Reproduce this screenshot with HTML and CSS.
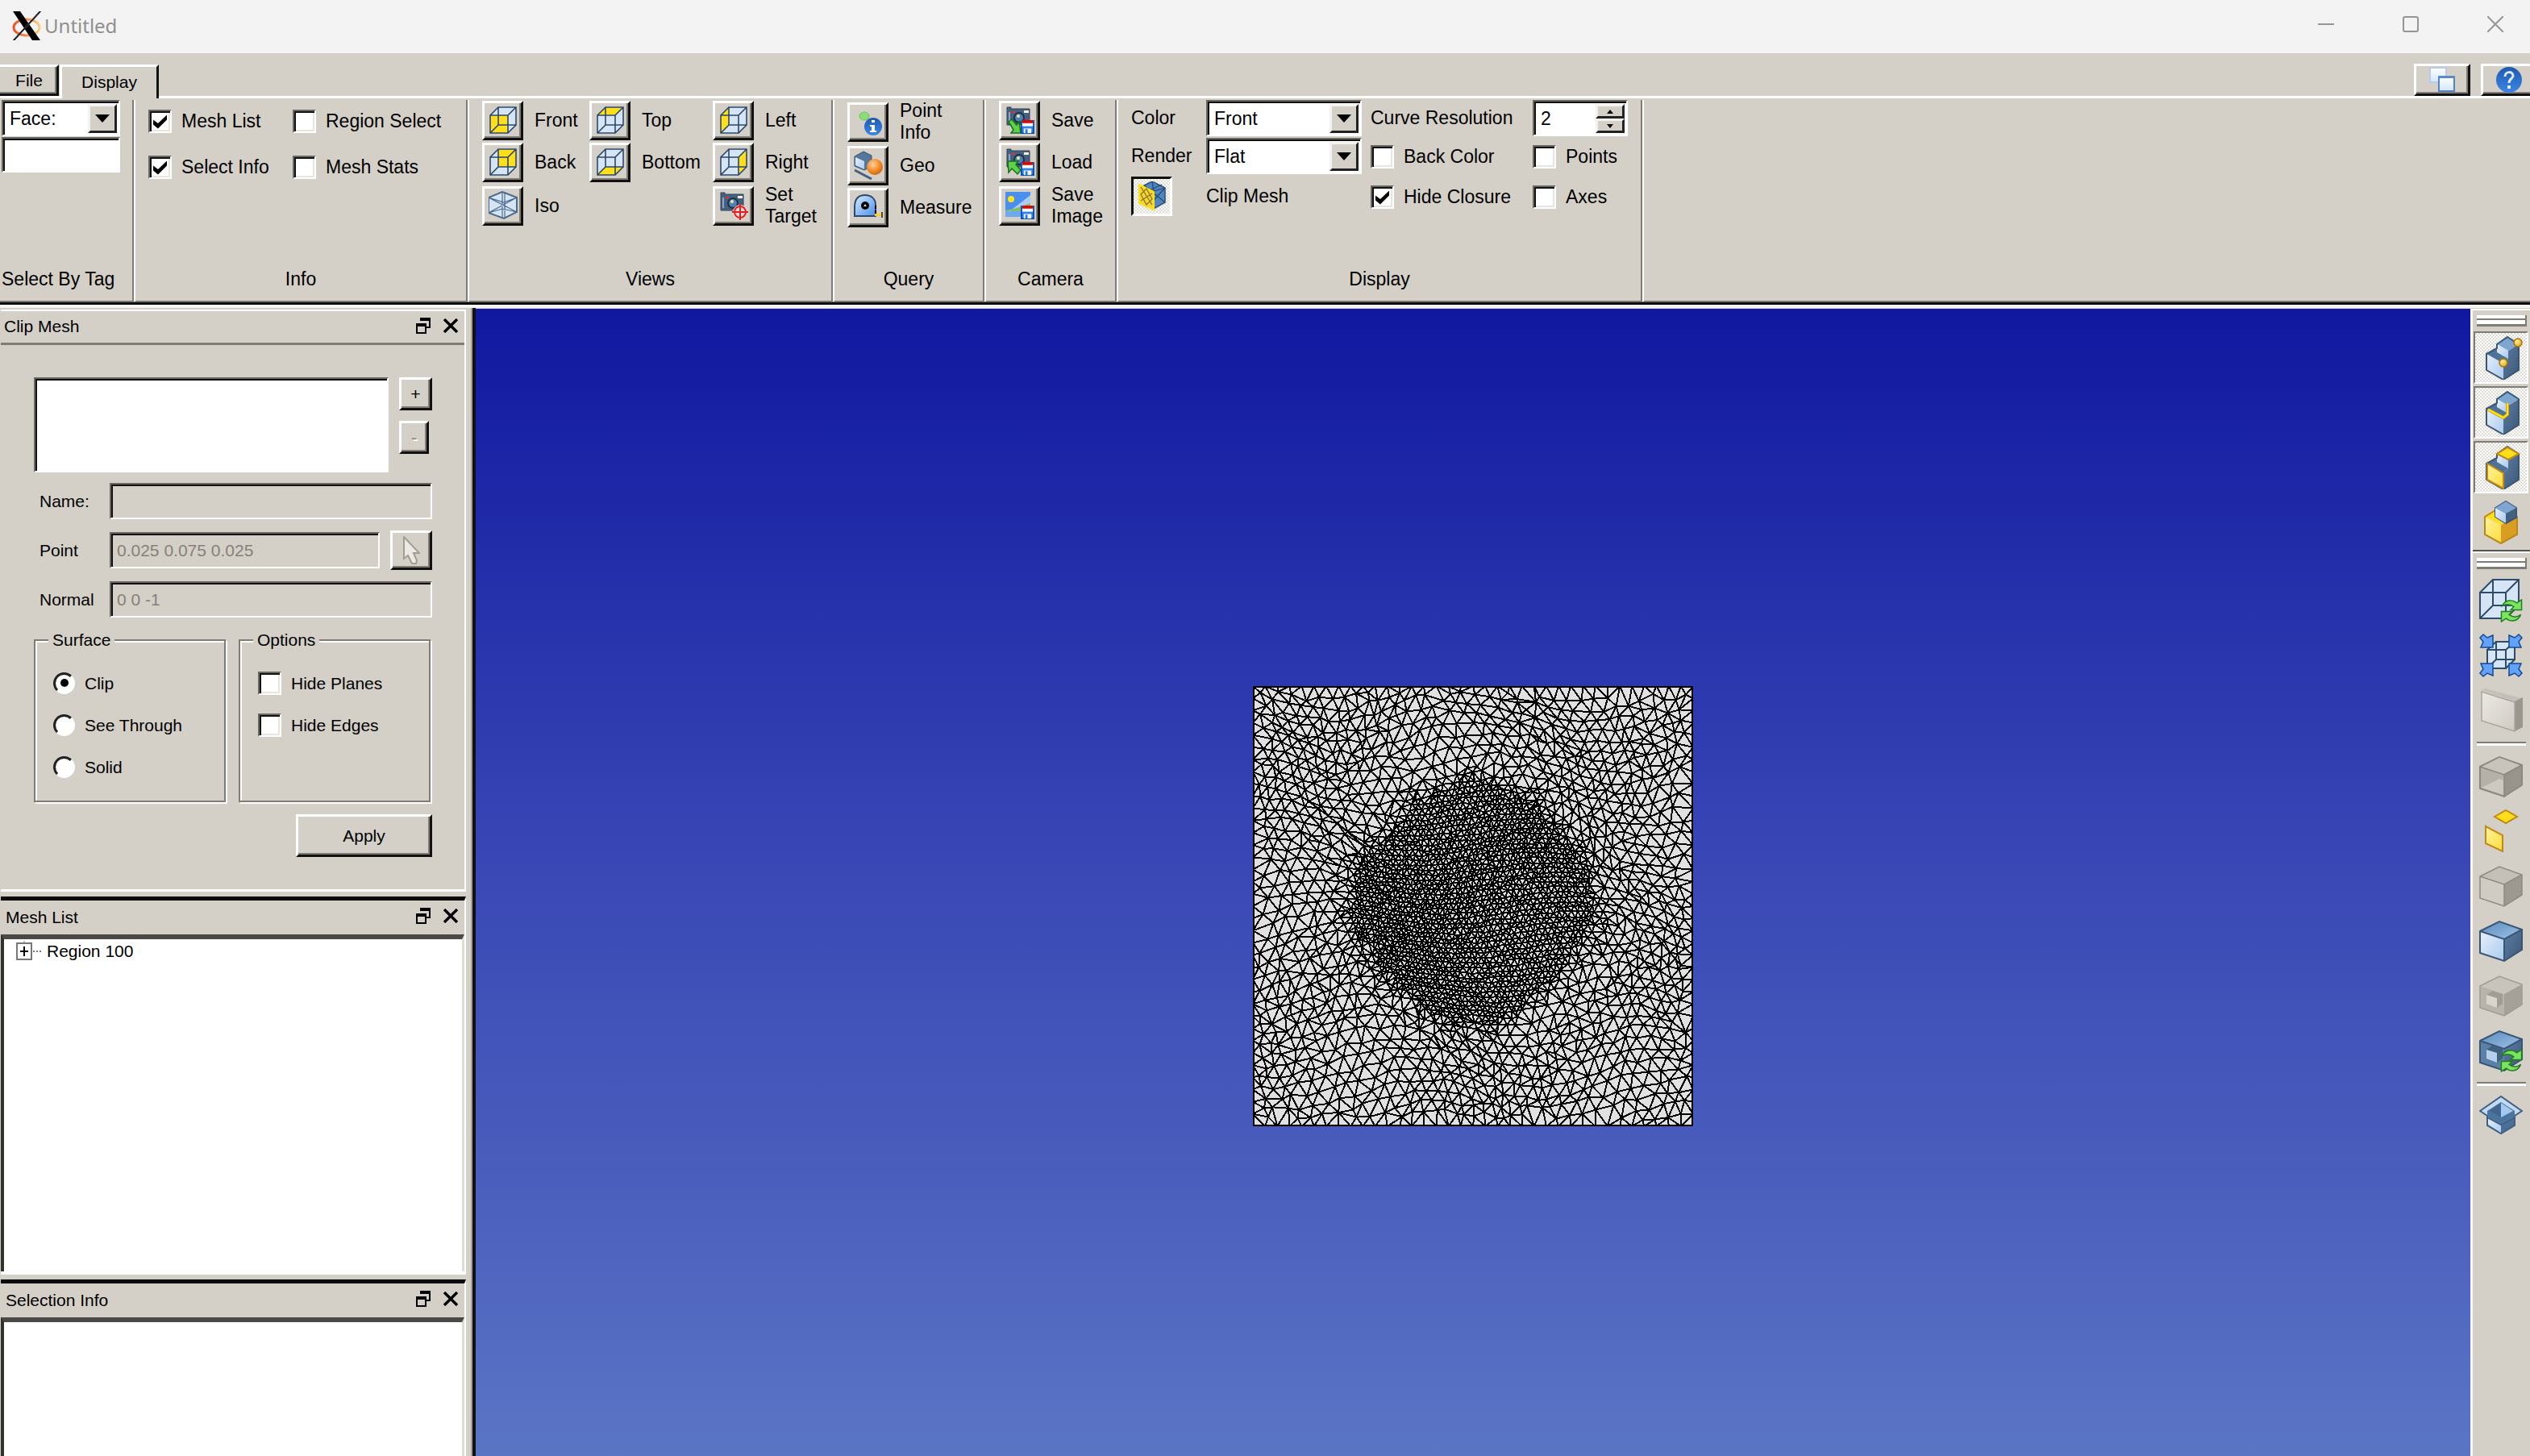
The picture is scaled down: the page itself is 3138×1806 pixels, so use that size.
FILE: index.html
```html
<!DOCTYPE html>
<html lang="en">
<head>
<meta charset="utf-8">
<title>Untitled</title>
<link rel="stylesheet" href="styles.css">
</head>
<body>
<svg class="sprite" aria-hidden="true">
  <defs>
    <linearGradient id="g-light" x1="0" y1="0" x2="1" y2="1"><stop offset="0" stop-color="#e6f0fb"/><stop offset="1" stop-color="#abcaee"/></linearGradient>
    <linearGradient id="g-top" x1="0" y1="0" x2="1" y2="1"><stop offset="0" stop-color="#5c8abb"/><stop offset="1" stop-color="#9cc2ea"/></linearGradient>
    <linearGradient id="g-dark" x1="0" y1="0" x2="1" y2="1"><stop offset="0" stop-color="#5b7da3"/><stop offset="1" stop-color="#3d5877"/></linearGradient>
    <linearGradient id="g-yellow" x1="0" y1="0" x2="1" y2="1"><stop offset="0" stop-color="#fff2a0"/><stop offset="1" stop-color="#ffdd3a"/></linearGradient>
    <radialGradient id="g-orange" cx=".4" cy=".35" r=".7"><stop offset="0" stop-color="#ffd2a0"/><stop offset=".6" stop-color="#f08a24"/><stop offset="1" stop-color="#c96008"/></radialGradient>
    <radialGradient id="g-gold" cx=".4" cy=".35" r=".7"><stop offset="0" stop-color="#fff3a0"/><stop offset="1" stop-color="#e0a010"/></radialGradient>
    <linearGradient id="g-blue" x1="0" y1="0" x2="0" y2="1"><stop offset="0" stop-color="#1d5ab0"/><stop offset="1" stop-color="#3d86e6"/></linearGradient>
    <linearGradient id="g-tape" x1="0" y1="0" x2="1" y2="1"><stop offset="0" stop-color="#dcebfd"/><stop offset="1" stop-color="#4a90ea"/></linearGradient>
    <linearGradient id="g-win" x1="0" y1="0" x2="0" y2="1"><stop offset="0" stop-color="#fff"/><stop offset="1" stop-color="#d3e5f6"/></linearGradient>
    <linearGradient id="g-grey" x1="0" y1="0" x2="1" y2="1"><stop offset="0" stop-color="#ece9e4"/><stop offset="1" stop-color="#cfcbc3"/></linearGradient>
    <linearGradient id="g-ring" x1="0" y1="0" x2="1" y2="0"><stop offset="0" stop-color="#f0501e"/><stop offset="1" stop-color="#f8cf80"/></linearGradient>
  </defs>
  <symbol id="cube-fill" viewBox="0 0 36 36"><path d="M1 12 12 1H35V24L24 35H1Z" fill="#d5e5f6"/></symbol>
  <symbol id="cube-lines" viewBox="0 0 36 36"><path d="M2 12H24V34H2ZM12 2H34V24H12ZM2 12 12 2M24 12 34 2M24 34 34 24M2 34 12 24" fill="none" stroke="#2b4767" stroke-width="1.6"/></symbol>
  <symbol id="camera" viewBox="0 0 36 36"><path d="M2 5V2H7V4H30V24H2Z" fill="#46617f" stroke="#2c425c"/><path d="M4 8H6V21H4Z" fill="#8fa5bd"/><path d="M8 7H12V9H8Z" fill="#e03030"/><path d="M23 6H29V9H23Z" fill="#f6f0d8"/><circle cx="17" cy="15" r="7" fill="#1f2f42"/><circle cx="17" cy="15" r="5" fill="#4f80b8"/><circle cx="16" cy="13" r="2" fill="#f0e89a"/></symbol>
  <symbol id="floppy" viewBox="0 0 18 18"><path d="M1 1H17V17H1Z" fill="#3282ea" stroke="#0c4fb0" stroke-width="2"/><path d="M2 0H16V8H2Z" fill="#fff"/><path d="M2 0H16V4H2Z" fill="#dc0808"/><path d="M4 11H14V17H4Z" fill="#f0f6ff"/><path d="M6 12H9V17H6Z" fill="#2a78e0"/></symbol>
  <symbol id="step-block" viewBox="0 0 54 54"><path d="M36 18 49 10V42L30 54V34L36 28Z" fill="url(#g-dark)"/><path d="M22 10 35 1 49 10 36 18Z" fill="#7ea6d0"/><path d="M22 10 36 18V28L22 20Z" fill="url(#g-light)"/><path d="M9 22 22 15V20L36 28 30 34Z" fill="#4f7297"/><path d="M9 22 30 34V54L9 42Z" fill="url(#g-light)"/><path d="M9 22 22 15V10L35 1 49 10V42L30 54 9 42Z" fill="none" stroke="#3a5674" stroke-width="2"/></symbol>
  <symbol id="refresh" viewBox="0 0 28 30"><path d="M2 9C6 1 15 0 21 5L27 1V14H13L17 10C12 6 7 6 2 9Z" fill="#7be35f" stroke="#1f7f1a" stroke-width="1.5"/><path d="M26 20C22 29 13 30 7 25L1 29V16H15L11 20C16 24 21 24 26 20Z" fill="#7be35f" stroke="#1f7f1a" stroke-width="1.5"/></symbol>
  <symbol id="float" viewBox="0 0 20 22"><path d="M7 2H18V13H13" fill="none" stroke="#000" stroke-width="2"/><path d="M6 1H19V5H6Z"/><path d="M2 9H13V20H2Z" fill="#d4d0c8" stroke="#000" stroke-width="2"/><path d="M1 8H14V12H1Z"/></symbol>
  <symbol id="cross" viewBox="0 0 20 18"><path d="M2 1 18 17M18 1 2 17" stroke="#000" stroke-width="3.4"/></symbol>
</svg>

<header class="titlebar">
  <svg class="logo" viewBox="0 0 36 36" aria-hidden="true"><ellipse cx="18" cy="20" rx="16" ry="10" fill="none" stroke="url(#g-ring)" stroke-width="3"/><path d="M1 0H10L35 36H25Z" fill="#000"/><path d="M34 0H36L3 36H1Z" fill="#000" stroke="#444"/></svg>
  <h1 class="title">Untitled</h1>
  <div class="window-controls">
    <button class="wbtn" aria-label="Minimize"><svg viewBox="0 0 20 20"><path d="M0 10H20"/></svg></button>
    <button class="wbtn" aria-label="Maximize"><svg viewBox="0 0 20 20"><rect x="1" y="1" width="18" height="18" rx="2"/></svg></button>
    <button class="wbtn" aria-label="Close"><svg viewBox="0 0 20 20"><path d="M0 0 20 20M20 0 0 20"/></svg></button>
  </div>
</header>

<nav class="tabs">
  <button class="tab tab-file">File</button>
  <button class="tab tab-active">Display</button>
  <div class="tab-tools">
    <button class="corner-btn" aria-label="Windows"><svg viewBox="0 0 32 32"><path d="M1 1H21V19H1Z" fill="url(#g-win)" stroke="#b4cdec" stroke-width="2"/><path d="M12 12H31V30H12Z" fill="url(#g-win)" stroke="#5585c8" stroke-width="2"/><path d="M11 11H32V14H11Z" fill="#5a8bce"/></svg></button>
    <button class="corner-btn" aria-label="Help"><svg viewBox="0 0 32 32"><circle cx="16" cy="16" r="16" fill="url(#g-blue)"/><path d="M11 12C11 5 21 5 21 11 21 15 16 14 16 20" fill="none" stroke="#dceafc" stroke-width="3"/><path d="M14 23H18V27H14Z" fill="#dceafc"/></svg></button>
  </div>
</nav>

<section class="ribbon">
  <div class="group g-tag">
    <div class="tag-fields">
      <span class="combo"><select aria-label="Entity type"><option>Face:</option></select><span class="arrow"></span></span>
      <input class="sunken tag-input" type="text" aria-label="Tag">
    </div>
    <h2>Select By Tag</h2>
  </div>
  <div class="group g-info">
    <div class="info-grid">
      <label class="check"><input type="checkbox" checked>Mesh List</label>
      <label class="check"><input type="checkbox">Region Select</label>
      <label class="check"><input type="checkbox" checked>Select Info</label>
      <label class="check"><input type="checkbox">Mesh Stats</label>
    </div>
    <h2>Info</h2>
  </div>
  <div class="group g-views">
    <div class="views-grid">
      <label class="tool"><button class="ibtn"><svg viewBox="0 0 36 36"><use href="#cube-fill"/><path d="M2 12H24V34H2Z" fill="#ffdf1b"/><use href="#cube-lines"/></svg></button><span>Front</span></label>
      <label class="tool"><button class="ibtn"><svg viewBox="0 0 36 36"><use href="#cube-fill"/><path d="M2 12 12 2H34L24 12Z" fill="#ffdf1b"/><use href="#cube-lines"/></svg></button><span>Top</span></label>
      <label class="tool"><button class="ibtn"><svg viewBox="0 0 36 36"><use href="#cube-fill"/><path d="M2 12 12 2V24L2 34Z" fill="#ffdf1b"/><use href="#cube-lines"/></svg></button><span>Left</span></label>
      <label class="tool"><button class="ibtn"><svg viewBox="0 0 36 36"><use href="#cube-fill"/><path d="M12 2H34V24H12Z" fill="#ffdf1b"/><use href="#cube-lines"/></svg></button><span>Back</span></label>
      <label class="tool"><button class="ibtn"><svg viewBox="0 0 36 36"><use href="#cube-fill"/><path d="M2 34 12 24H34L24 34Z" fill="#ffdf1b"/><use href="#cube-lines"/></svg></button><span>Bottom</span></label>
      <label class="tool"><button class="ibtn"><svg viewBox="0 0 36 36"><use href="#cube-fill"/><path d="M24 12 34 2V24L24 34Z" fill="#ffdf1b"/><use href="#cube-lines"/></svg></button><span>Right</span></label>
      <label class="tool"><button class="ibtn"><svg viewBox="0 0 36 36"><path d="M0 8 17 1 35 8V26L19 34 0 27Z" fill="#d5e5f6" stroke="#4d6b8c" stroke-width="2"/><path d="M0 8 35 26M35 8 0 27M17 1V34M20 1V34M0 27 17 22 35 26M0 8 19 14 35 8" fill="none" stroke="#4d6b8c" stroke-width="1.2"/></svg></button><span>Iso</span></label>
      <label class="tool tool-target"><button class="ibtn"><svg viewBox="0 0 36 36"><use href="#camera" width="36" height="36"/><circle cx="26" cy="26" r="9" fill="#f4dcd8"/><circle cx="26" cy="26" r="7" fill="none" stroke="#e02020" stroke-width="2"/><path d="M26 16V36M16 26H36" stroke="#e02020" stroke-width="2"/></svg></button><span>Set<br>Target</span></label>
    </div>
    <h2>Views</h2>
  </div>
  <div class="group g-query">
    <div class="tool-column">
      <label class="tool"><button class="ibtn"><svg viewBox="0 0 36 36"><ellipse cx="13" cy="11" rx="6" ry="5" fill="#8cdc78" stroke="#6fbf5c"/><circle cx="24" cy="24" r="11" fill="url(#g-blue)"/><path d="M22 16H26V19H22ZM20 22H26V29H28V31H20V29H22V24H20Z" fill="#fff"/></svg></button><span>Point<br>Info</span></label>
      <label class="tool"><button class="ibtn"><svg viewBox="0 0 36 36"><path d="M1 7 12 1 22 6V19L13 24 1 19Z" fill="#55779c" stroke="#344f6d"/><path d="M2 8 13 13V23L2 18Z" fill="url(#g-light)"/><circle cx="26" cy="20" r="10" fill="url(#g-orange)"/><path d="M1 24 22 35" stroke="#46617f" stroke-width="3"/></svg></button><span>Geo</span></label>
      <label class="tool"><button class="ibtn"><svg viewBox="0 0 36 36"><path d="M1 29V18C1 7 6 3 14 3S27 8 27 15V29Z" fill="url(#g-tape)" stroke="#2b4a72" stroke-width="2"/><path d="M27 16V28" stroke="#000" stroke-width="2" stroke-dasharray="4 2"/><circle cx="14" cy="16" r="5" fill="#000"/><path d="M12 17H16L14 14Z" fill="#ddd"/><path d="M26 26H35V29H26Z" fill="#f7cf28"/><path d="M35 24V31" stroke="#554b20" stroke-width="2"/></svg></button><span>Measure</span></label>
    </div>
    <h2>Query</h2>
  </div>
  <div class="group g-camera">
    <div class="tool-column">
      <label class="tool"><button class="ibtn"><svg viewBox="0 0 36 36"><use href="#camera" width="36" height="36"/><path d="M4 20 8 17 14 24 17 20 19 34H7L10 30Z" fill="#5fd04c" stroke="#1b6e17" stroke-width="1.5"/><use href="#floppy" x="19" y="18" width="17" height="17"/></svg></button><span>Save</span></label>
      <label class="tool"><button class="ibtn"><svg viewBox="0 0 36 36"><use href="#camera" width="36" height="36"/><path d="M3 17H16L13 21 19 28 15 33 8 26 4 31Z" fill="#5fd04c" stroke="#1b6e17" stroke-width="1.5"/><use href="#floppy" x="19" y="18" width="17" height="17"/></svg></button><span>Load</span></label>
      <label class="tool"><button class="ibtn"><svg viewBox="0 0 36 36"><path d="M0 1H31V32H0Z" fill="#6fa8f2"/><path d="M0 1H31V10L8 24H0Z" fill="#4a8fee"/><path d="M31 5V17L4 26Z" fill="#a9cdf6"/><path d="M0 24 14 21 31 15V25H0Z" fill="#7fbf72"/><circle cx="7" cy="10" r="4" fill="#ffe21c"/><use href="#floppy" x="19" y="18" width="17" height="17"/></svg></button><span>Save<br>Image</span></label>
    </div>
    <h2>Camera</h2>
  </div>
  <div class="group g-display">
    <div class="display-cols">
      <div class="display-left">
        <label for="color">Color</label>
        <span class="combo"><select id="color"><option>Front</option></select><span class="arrow"></span></span>
        <label for="render">Render</label>
        <span class="combo"><select id="render"><option>Flat</option></select><span class="arrow"></span></span>
        <button class="ibtn pressed" id="clip"><svg viewBox="0 0 36 36"><path d="M8 5 18 0 34 8V26L20 34 8 30Z" fill="#4f86c0" stroke="#2f5078" stroke-width="1.5"/><path d="M8 5 34 26M34 8 14 30M20 12V34M18 0 20 12 34 8M8 14 30 4" stroke="#2b4a70" stroke-width="1.3" fill="none"/><path d="M2 4 20 13V35L2 27Z" fill="#f2d53c" stroke="#ffe010" stroke-width="2"/><path d="M4 7 18 29M18 15 4 24M4 16 11 9 18 22 11 29Z" fill="none" stroke="#8a7613" stroke-width="1.3"/></svg></button>
        <label for="clip">Clip Mesh</label>
      </div>
      <div class="display-right">
        <label for="curve">Curve Resolution</label>
        <span class="combo spin"><input id="curve" type="text" value="2"><span class="spin-btns"><button class="up" aria-label="Increase"></button><button class="down" aria-label="Decrease"></button></span></span>
        <label class="check"><input type="checkbox">Back Color</label>
        <label class="check"><input type="checkbox">Points</label>
        <label class="check"><input type="checkbox" checked>Hide Closure</label>
        <label class="check"><input type="checkbox">Axes</label>
      </div>
    </div>
    <h2>Display</h2>
  </div>
</section>

<main class="workspace">
  <aside class="dock">
    <section class="panel panel-clip">
      <header class="panel-head"><h2>Clip Mesh</h2><button aria-label="Float"><svg viewBox="0 0 20 22"><use href="#float"/></svg></button><button aria-label="Close"><svg viewBox="0 0 20 18"><use href="#cross"/></svg></button></header>
      <div class="clip-body">
        <div class="plane-row">
          <div class="plane-list sunken"></div>
          <div class="plane-btns"><button class="raised add">+</button><button class="raised remove" disabled>-</button></div>
        </div>
        <div class="field"><label for="name">Name:</label><input id="name" class="sunken" disabled></div>
        <div class="field"><label for="point">Point</label><input id="point" class="sunken" value="0.025 0.075 0.025" disabled><button class="raised pick" aria-label="Pick point"><svg viewBox="0 0 22 36"><path d="M2 1V28L7 24 12 34 17 34 18 30 14 21H21Z" fill="#ece9e4" stroke="#a19d94" stroke-width="2"/></svg></button></div>
        <div class="field"><label for="normal">Normal</label><input id="normal" class="sunken" value="0 0 -1" disabled></div>
        <div class="boxes">
          <fieldset><legend>Surface</legend>
            <label class="radio"><input type="radio" name="surface" checked>Clip</label>
            <label class="radio"><input type="radio" name="surface">See Through</label>
            <label class="radio"><input type="radio" name="surface">Solid</label>
          </fieldset>
          <fieldset><legend>Options</legend>
            <label class="check"><input type="checkbox">Hide Planes</label>
            <label class="check"><input type="checkbox">Hide Edges</label>
          </fieldset>
        </div>
        <button class="raised apply">Apply</button>
      </div>
    </section>
    <section class="panel panel-list">
      <header class="panel-head"><h2>Mesh List</h2><button aria-label="Float"><svg viewBox="0 0 20 22"><use href="#float"/></svg></button><button aria-label="Close"><svg viewBox="0 0 20 18"><use href="#cross"/></svg></button></header>
      <ul class="panel-box">
        <li><svg class="expander" viewBox="0 0 32 26" aria-hidden="true"><path d="M10 0V3" stroke="#777"/><path d="M1 3H19V23H1Z" fill="#fff" stroke="#777" stroke-width="2"/><path d="M10 7V19M5 13H15" stroke="#000" stroke-width="2"/><path d="M21 13H32" stroke="#777" stroke-width="2" stroke-dasharray="2 2"/></svg>Region 100</li>
      </ul>
    </section>
    <section class="panel panel-info">
      <header class="panel-head"><h2>Selection Info</h2><button aria-label="Float"><svg viewBox="0 0 20 22"><use href="#float"/></svg></button><button aria-label="Close"><svg viewBox="0 0 20 18"><use href="#cross"/></svg></button></header>
      <div class="panel-box"></div>
    </section>
  </aside>

  <div class="viewport">
    <svg class="mesh" viewBox="0 0 546 546" role="img" aria-label="Triangle mesh"><rect width="546" height="546" fill="#e1e1e1"/><path id="mesh-lines" fill="none" stroke="#000" stroke-width="2" shape-rendering="crispEdges"/><rect x="1" y="1" width="544" height="544" fill="none" stroke="#000" stroke-width="2"/></svg>
  </div>

  <aside class="toolbar">
    <div class="tool-set">
      <div class="grip"></div>
      <button class="vbtn on" aria-label="Select vertices"><svg viewBox="0 0 54 54"><use href="#step-block"/><circle cx="48" cy="8" r="5" fill="url(#g-gold)" stroke="#a87410" stroke-width="1.5"/><circle cx="30" cy="33" r="5" fill="url(#g-gold)" stroke="#a87410" stroke-width="1.5"/></svg></button>
      <button class="vbtn on" aria-label="Select edges"><svg viewBox="0 0 54 54"><use href="#step-block"/><path d="M11 23 30 33 35 29V15" fill="none" stroke="#cba317" stroke-width="4"/><path d="M11 23 30 33 35 29V15" fill="none" stroke="#ffe61c" stroke-width="2"/></svg></button>
      <button class="vbtn on" aria-label="Select faces"><svg viewBox="0 0 54 54"><use href="#step-block"/><path d="M22 10 35 2 49 10 36 17Z" fill="#ffde1c" stroke="#c28a14" stroke-width="2"/><path d="M10 22 30 34V53L10 42Z" fill="url(#g-yellow)" stroke="#c28a14" stroke-width="2"/></svg></button>
      <button class="vbtn" aria-label="Select regions"><svg viewBox="0 0 54 54"><path d="M27 30 47 20V42L27 53Z" fill="#d99d22"/><path d="M7 20 20 12 47 20 27 30Z" fill="#ffde1c"/><path d="M7 20 27 30V53L7 42Z" fill="url(#g-yellow)"/><path d="M7 20 20 12 47 20V42L27 53 7 42Z" fill="none" stroke="#bd8616" stroke-width="2"/><path d="M20 9 33 1 46 9V21L33 28 20 20Z" fill="#44607f" stroke="#3a5674" stroke-width="2"/><path d="M20 9 33 1 46 9 33 16Z" fill="#7ea6d0"/><path d="M20 9 33 16V28L20 20Z" fill="url(#g-light)"/></svg></button>
    </div>
    <div class="tool-set">
      <div class="grip"></div>
      <button class="vbtn" aria-label="Reset view"><svg viewBox="0 0 54 54"><path d="M1 17 17 1H49V33L33 49H1Z" fill="#d5e5f6"/><path d="M1 17H33V49H1ZM17 1H49V33H17ZM1 17 17 1M33 17 49 1M33 49 49 33M1 49 17 33" fill="none" stroke="#2f4b6b" stroke-width="2"/><use href="#refresh" x="26" y="25" width="28" height="29"/></svg></button>
      <button class="vbtn" aria-label="Fit view"><svg viewBox="0 0 54 54"><path d="M10 20 21 10H44V32L33 43H10Z" fill="#d5e5f6"/><path d="M10 20H33V43H10ZM21 10H44V32H21ZM10 20 21 10M33 20 44 10M33 43 44 32M10 43 21 32" fill="none" stroke="#2f4b6b" stroke-width="2"/><g fill="#62a2f8" stroke="#144a94" stroke-width="1.5"><path d="M1 5 5 1 10 5 17 2V17H2L5 10Z"/><path d="M53 5 49 1 44 5 37 2V17H52L49 10Z"/><path d="M1 49 5 53 10 49 17 52V37H2L5 44Z"/><path d="M53 49 49 53 44 49 37 52V37H52L49 44Z"/></g></svg></button>
      <button class="vbtn" aria-label="Clip plane"><svg viewBox="0 0 54 54"><path d="M3 2 7 0 53 12 44 16Z" fill="#c4c0b8"/><path d="M44 16 54 11V48L44 53Z" fill="#9b978e"/><path d="M3 4 44 17V53L3 40Z" fill="url(#g-grey)" stroke="#aaa69d" stroke-width="1.5"/></svg></button>
      <hr>
      <button class="vbtn" aria-label="Interior"><svg viewBox="0 0 54 54"><path d="M1 15 25 3 53 13V36L31 52 1 42Z" fill="#b5b1a8" stroke="#8c8880" stroke-width="2"/><path d="M1 15 25 3 53 13 31 25Z" fill="#c8c4bc" stroke="#8c8880" stroke-width="1.5"/><path d="M31 25 53 13V38L31 52Z" fill="#98948b" stroke="#8c8880" stroke-width="1.5"/><path d="M3 41 25 30 30 32V50Z" fill="#cdc9c1"/></svg></button>
      <button class="vbtn" aria-label="Faces"><svg viewBox="0 0 54 54"><path d="M19 9 33 1 47 9 33 17Z" fill="#ffde1c" stroke="#c28a14" stroke-width="2"/><path d="M8 21 29 32V52L8 42Z" fill="url(#g-yellow)" stroke="#c28a14" stroke-width="2"/></svg></button>
      <button class="vbtn" aria-label="Solid, inactive"><svg viewBox="0 0 54 54"><path d="M1 15 25 3 53 13 31 25Z" fill="#c4c0b8"/><path d="M31 25 53 13V38L31 52Z" fill="#9d9990"/><path d="M1 15 31 25V52L1 42Z" fill="#d0ccc4"/><path d="M1 15 25 3 53 13V38L31 52 1 42ZM1 15 31 25 53 13M31 25V52" fill="none" stroke="#8f8b82" stroke-width="1.5"/></svg></button>
      <button class="vbtn" aria-label="Solid"><svg viewBox="0 0 54 54"><path d="M1 15 25 3 53 13 31 25Z" fill="url(#g-top)"/><path d="M31 25 53 13V38L31 52Z" fill="url(#g-dark)"/><path d="M1 15 31 25V52L1 42Z" fill="url(#g-light)"/><path d="M1 15 25 3 53 13V38L31 52 1 42ZM1 15 31 25 53 13M31 25V52" fill="none" stroke="#3a5674" stroke-width="2"/></svg></button>
      <button class="vbtn" aria-label="Nested, inactive"><svg viewBox="0 0 54 54"><path d="M1 15 25 3 53 13 31 25Z" fill="#c8c4bc"/><path d="M31 25 53 13V38L31 52Z" fill="#a5a198"/><path d="M1 15 31 25V52L1 42Z" fill="#b8b4ab"/><path d="M1 15 25 3 53 13V38L31 52 1 42Z" fill="none" stroke="#a09c93" stroke-width="1.5"/><path d="M9 26 16 21 29 25V37L22 42Z" fill="#a19d94"/><path d="M9 26 22 30V42L9 37Z" fill="#d8d5ce"/></svg></button>
      <button class="vbtn" aria-label="Refresh nested"><svg viewBox="0 0 54 54"><path d="M1 15 25 3 53 13 31 25Z" fill="url(#g-top)"/><path d="M31 25 53 13V38L31 52Z" fill="url(#g-dark)"/><path d="M1 15 31 25V52L1 42Z" fill="#5b80a8"/><path d="M1 15 25 3 53 13V38L31 52 1 42ZM1 15 31 25 53 13" fill="none" stroke="#3a5674" stroke-width="2"/><path d="M9 26 16 21 29 25V37L22 42Z" fill="#41607f"/><path d="M9 26 22 30V42L9 37Z" fill="#b5cfee"/><use href="#refresh" x="26" y="25" width="28" height="29"/></svg></button>
      <hr>
      <button class="vbtn" aria-label="Open box"><svg viewBox="0 0 54 54"><path d="M10 24V38L27 48 44 38V24Z" fill="#4b6f97" stroke="#3f5f83" stroke-width="2"/><path d="M11 29 27 37V47L11 37Z" fill="url(#g-light)"/><path d="M1 20 27 2 53 20 44 26V28L27 37 10 28V26Z" fill="#c3daf2" stroke="#3f5f83" stroke-width="2"/><path d="M10 20 27 9 44 20V27L27 36 10 27Z" fill="#4b749f"/><path d="M13 20 27 10V28Z" fill="#41678f"/><path d="M27 10 42 20 27 28Z" fill="#a5c8ee"/></svg></button>
    </div>
  </aside>
</main>
<script src="mesh.js"></script>
</body>
</html>
```
FILE: styles.css
```css
:root {
  --face: #d4d0c8;
  --shade: #7f7c76;
  --black: #111;
}
* { box-sizing: border-box; }
body {
  margin: 0;
  height: 100vh;
  overflow: hidden;
  display: flex;
  flex-direction: column;
  background: var(--face);
  color: #000;
  font: 23px/27px "Liberation Sans", Arial, sans-serif;
}
button, input, select { font: inherit; color: inherit; margin: 0; border-radius: 0; }
button { padding: 0; border: 0; background: none; }
h1, h2 { margin: 0; font: inherit; }
svg { display: block; }
.sprite { position: absolute; width: 0; height: 0; }

/* Title bar */
.titlebar { display: flex; align-items: center; height: 66px; padding: 0 0 2px 15px; background: #f3f3f3; }
.logo { width: 36px; height: 36px; }
.title { margin-left: 4px; font: 24px/32px "Noto Sans", sans-serif; color: #8f8f8f; }
.window-controls { display: flex; margin: 0 0 4px auto; }
.wbtn { width: 105px; height: 54px; display: grid; place-items: center; }
.wbtn:last-child { margin-right: -9px; }
.wbtn svg { width: 20px; height: 20px; fill: none; stroke: #959595; stroke-width: 2; }

/* Tabs */
.tabs { display: flex; align-items: flex-end; height: 56px; padding-bottom: 3px; box-shadow: inset 0 -3px #fff; font-size: 21px; }
.tab { border: 3px solid; border-color: #fff var(--black) var(--black) #fff; }
.tab-file { width: 73px; height: 39px; border-left: 0; padding-left: 2px; box-shadow: inset -2px -2px var(--shade); }
.tab-active { width: 123px; height: 42px; margin: 0 0 -3px 1px; border-bottom: 0; background: var(--face); padding-bottom: 2px; }
.tab-tools { display: flex; gap: 13px; margin-left: auto; margin-right: -9px; }
.corner-btn { width: 70px; height: 40px; display: grid; place-items: center; border: 3px solid; border-color: #fff var(--black) var(--black) #fff; box-shadow: inset -2px -2px var(--shade); }
.corner-btn svg { width: 32px; height: 32px; }

/* Bevels */
.raised, .ibtn { background: var(--face); border: 3px solid; border-color: #fff var(--black) var(--black) #fff; box-shadow: inset -2px -2px var(--shade); }
.sunken, .combo { border: 2px solid; border-color: #6b6862 #fff #fff #6b6862; box-shadow: inset 2px 2px var(--black); background: #fff; }
.combo { display: flex; height: 45px; padding: 3px 2px 2px 3px; }
.combo select, .combo input { appearance: none; flex: 1; min-width: 0; border: 0; padding: 0 5px; background: transparent; outline: 0; }
.arrow { width: 36px; border: 3px solid; border-color: #f4f2ee #222 #222 #f4f2ee; background: var(--face); display: grid; place-items: center; pointer-events: none; }
.arrow::before { content: ""; border: solid transparent; border-width: 10px 9px 0; border-top-color: #000; }
.spin-btns { width: 36px; display: flex; flex-direction: column; }
.spin-btns button { flex: 1; display: grid; place-items: center; background: var(--face); border: 3px solid; border-color: #f4f2ee #222 #222 #f4f2ee; }
.up::before, .down::before { content: ""; border: solid transparent; }
.up::before { border-width: 0 4px 5px; border-bottom-color: #000; }
.down::before { border-width: 5px 4px 0; border-top-color: #000; }

/* Check boxes and radios */
.check, .radio { display: flex; align-items: center; gap: 12px; }
.check input { appearance: none; flex: none; width: 29px; height: 29px; background: #fff; border: 2px solid; border-color: #6b6862 #fff #fff #6b6862; box-shadow: inset 2px 2px var(--black), inset -2px -2px #e8e5e0; }
.check input:checked::before { content: ""; display: block; margin: 5px 4px; width: 17px; height: 17px; background: #000; clip-path: polygon(0 35%, 0 70%, 35% 100%, 100% 35%, 100% 0, 35% 62%); }
.radio input { appearance: none; flex: none; width: 27px; height: 27px; border-radius: 50%; background: #fff; border: 3px solid; border-color: #222 #fff #fff #222; display: grid; place-items: center; }
.radio input:checked::before { content: ""; width: 10px; height: 10px; border-radius: 50%; background: #000; }

/* Ribbon */
.ribbon { display: flex; height: 260px; padding: 1px 0 8px; box-shadow: inset 0 -2px #f4f2ee, inset 0 -4px #fff, inset 0 -7px #0a0a0a, inset 0 -9px #77746d; }
.group { display: flex; flex-direction: column; justify-content: space-between; padding: 0 16px 14px; margin: 1px 2px 0 0; border-right: 2px solid var(--shade); box-shadow: 2px 0 #fff; }
.group h2 { text-align: center; white-space: nowrap; }
.g-tag { width: 166px; padding-left: 2px; }
.g-tag h2 { text-align: left; }
.tag-fields { display: flex; flex-direction: column; gap: 1px; width: 147px; }
.tag-input { height: 44px; width: 100%; }
.g-info { width: 412px; }
.info-grid { display: grid; grid-template-columns: 179px auto; row-gap: 27px; padding-top: 11px; }
.info-grid .check { height: 30px; }
.g-views { width: 451px; }
.views-grid { display: grid; grid-template-columns: 133px 153px auto; grid-auto-rows: minmax(50px, auto); row-gap: 2px; }
.tool { display: flex; align-items: center; gap: 14px; min-height: 50px; }
.tool-target { grid-column: 3; }
.ibtn { flex: none; width: 51px; height: 49px; display: grid; place-items: center; }
.ibtn svg { width: 36px; height: 36px; }
.pressed { border-color: var(--black) #fff #fff var(--black); box-shadow: none; background: repeating-conic-gradient(#fff 0 25%, #dedbd5 0 50%) 0 0 / 4px 4px; }
.g-query { width: 186px; }
.g-camera { width: 162px; }
.tool-column { display: flex; flex-direction: column; gap: 2px; }
.g-display { width: 650px; }
.display-cols { display: flex; justify-content: space-between; }
.display-left { display: grid; grid-template-columns: 93px 193px; gap: 2px 0; align-items: center; justify-items: start; grid-auto-rows: minmax(45px, auto); }
.display-left .combo { width: 193px; }
.display-right { display: grid; grid-template-columns: 201px 118px; gap: 2px 0; grid-template-rows: 45px 47px 48px; align-items: center; }

/* Docked panels */
.workspace { flex: 1; min-height: 0; display: flex; font-size: 21px; }
.dock { width: 590px; flex: none; display: flex; flex-direction: column; padding: 2px 8px 0 1px; border-right: 4px solid var(--black); box-shadow: inset -2px 0 #a5a198; }
.panel { display: flex; flex-direction: column; border: solid #fff; border-width: 2px 2px 0 0; min-height: 0; }
.panel-head { display: flex; align-items: center; height: 42px; padding: 0 7px 2px 6px; flex: none; }
.panel-head h2 { flex: 1; }
.panel-head button { width: 20px; margin-left: 14px; padding-bottom: 2px; }
.panel-clip { flex: none; padding-bottom: 40px; border-bottom: 3px solid #fff; }
.panel-clip .panel-head { border-bottom: 3px solid var(--shade); padding-left: 4px; }
.panel-list { flex: 1; margin-top: 6px; border-bottom: 4px solid #fff; }
.panel-info { flex: 0 0 219px; margin-top: 6px; }
.panel-list, .panel-info { border-top: 5px solid #0c0c0c; }
.panel-box { flex: 1; margin: 0; padding: 1px 0 0 15px; list-style: none; background: #fff; border: solid; border-width: 6px 3px 0 4px; border-color: #4b4945 #e0ddd7 #fff #33312e; }
.panel-box li { display: flex; align-items: center; gap: 6px; height: 27px; }
.expander { width: 32px; height: 26px; }
.clip-body { display: flex; flex-direction: column; padding: 40px 40px 0 41px; }
.plane-row { display: flex; gap: 13px; margin-bottom: 11px; }
.plane-list { flex: 1; height: 118px; }
.plane-btns { width: 41px; display: flex; flex-direction: column; align-items: flex-start; gap: 13px; }
.add { width: 41px; height: 41px; }
.remove { width: 37px; height: 41px; color: #8a867d; text-shadow: 2px 2px #fff; }
.field { display: flex; align-items: center; height: 49px; margin-bottom: 12px; padding-left: 7px; }
.field label { width: 87px; }
.field input { flex: 1; min-width: 0; height: 45px; background: transparent; color: #85817a; padding: 0 7px; }
.pick { width: 52px; height: 49px; margin-left: 13px; display: grid; place-items: center; }
.pick svg { width: 22px; height: 36px; }
.boxes { display: grid; grid-template-columns: 1fr 1fr; gap: 16px; margin: 0 2px 15px 0; }
fieldset { min-width: 0; height: 215px; margin: 0; padding: 25px 22px 0; border: 2px solid var(--shade); box-shadow: inset 2px 2px #fff, 2px 2px #fff; }
legend { padding: 0 5px; margin-left: -6px; background: var(--face); }
fieldset label { height: 30px; margin-bottom: 22px; }
.apply { width: 169px; height: 53px; align-self: flex-end; }

/* 3D view */
.viewport { flex: 1; display: flex; align-items: center; justify-content: center; padding-top: 59px; margin-top: 1px; background: linear-gradient(#1018a0, #3a49b6 50%, #4b5fbd 77%, #5b75c5); }
.mesh { width: 546px; height: 546px; }

/* Right toolbar */
.toolbar { width: 74px; flex: none; margin-top: 1px; border-left: 3px solid #f8f8fa; }
.tool-set { display: flex; flex-direction: column; gap: 3px; padding: 6px 2px 2px 1px; border-top: 2px solid #fff; }
.tool-set:first-child { border-bottom: 2px solid #55534e; }
.grip { height: 14px; margin: 0 2px 3px 4px; background: linear-gradient(#fff 0 4px, var(--shade) 4px 6px, #fff 6px 11px, var(--shade) 11px 14px); border-right: 2px solid var(--shade); }
.vbtn { height: 65px; display: grid; place-items: center; border: 2px solid transparent; }
.vbtn svg { width: 54px; height: 54px; }
.on { border-color: var(--shade) #fff #fff var(--shade); background: repeating-conic-gradient(#fff 0 25%, #dedbd5 0 50%) 0 0 / 4px 4px; }
hr { width: 61px; height: 5px; margin: 4px 0 2px 4px; border: 0; border-top: 2px solid var(--shade); border-bottom: 3px solid #fff; }
```
FILE: mesh.js
```js
// Graded triangle mesh of the clipped square: a coarse outer grid refined around the centre.
(function () {
  const SIZE = 546, CX = 272, CY = 268;
  let seed = 12345;
  const rnd = () => ((seed = (seed * 1664525 + 1013904223) >>> 0) / 4294967296);
  // Signed distance outside the refined zone, whose rim is slightly ragged.
  const outside = (x, y) => {
    const a = Math.atan2(y - CY, x - CX);
    return Math.hypot(x - CX, y - CY) - 144 - 7 * Math.cos(4 * a) - 4 * Math.sin(11 * a) - 3 * Math.sin(23 * a);
  };
  const pts = [];

  const edge = 36;
  for (let i = 0; i < edge; i++) {
    const t = i * SIZE / edge;
    pts.push([t, 0.01 * rnd()], [SIZE - 0.01 * rnd(), t], [SIZE - t, SIZE - 0.01 * rnd()], [0.01 * rnd(), SIZE - t]);
  }
  const fill = (step, jitter, test) => {
    let row = 0;
    for (let y = -40; y < SIZE + 40; y += step * 0.866, row++) {
      for (let x = -40 + (row % 2) * step / 2; x < SIZE + 40; x += step) {
        const wave = jitter * 1.3;
        const px = x + wave * Math.sin(y / 47 + x / 60) + (rnd() - 0.5) * jitter;
        const py = y + wave * 2 * Math.sin(x / 51 - y / 90) + (rnd() - 0.5) * jitter;
        if (px > 7 && py > 7 && px < SIZE - 7 && py < SIZE - 7 && test(outside(px, py))) pts.push([px, py]);
      }
    }
  };
  fill(15, 7, d => d > 14);
  fill(10, 4, d => d > 0 && d <= 14);
  fill(7, 3, d => d <= 0);
  pts.sort((a, b) => a[0] - b[0]);

  // Incremental Delaunay triangulation, sweeping left to right.
  const n = pts.length;
  const all = pts.concat([[-9000, -9000], [273, 18000], [9000, -9000]]);
  const circle = (a, b, c) => {
    const [ax, ay] = all[a], [bx, by] = all[b], [cx, cy] = all[c];
    const d = 2 * (ax * (by - cy) + bx * (cy - ay) + cx * (ay - by)) || 1e-9;
    const A = ax * ax + ay * ay, B = bx * bx + by * by, C = cx * cx + cy * cy;
    const x = (A * (by - cy) + B * (cy - ay) + C * (ay - by)) / d;
    const y = (A * (cx - bx) + B * (ax - cx) + C * (bx - ax)) / d;
    return { a, b, c, x, y, r: (ax - x) ** 2 + (ay - y) ** 2 };
  };
  let open = [circle(n, n + 1, n + 2)];
  const done = [];
  for (let i = 0; i < n; i++) {
    const [px, py] = all[i];
    const count = new Map(), keep = [];
    for (const t of open) {
      const dx = px - t.x;
      if (dx > 0 && dx * dx > t.r) { done.push(t); continue; }
      if (dx * dx + (py - t.y) ** 2 >= t.r) { keep.push(t); continue; }
      for (const [u, v] of [[t.a, t.b], [t.b, t.c], [t.c, t.a]]) {
        const k = Math.min(u, v) * 100000 + Math.max(u, v);
        count.set(k, (count.get(k) || 0) + 1);
      }
    }
    for (const [k, c] of count) if (c === 1) keep.push(circle(Math.floor(k / 100000), k % 100000, i));
    open = keep;
  }
  const edges = new Set();
  for (const t of done.concat(open)) {
    for (const [u, v] of [[t.a, t.b], [t.b, t.c], [t.c, t.a]]) {
      if (u < n && v < n) edges.add(Math.min(u, v) * 100000 + Math.max(u, v));
    }
  }
  let d = "";
  for (const k of edges) {
    const p = all[Math.floor(k / 100000)], q = all[k % 100000];
    d += "M" + p[0].toFixed(1) + " " + p[1].toFixed(1) + "L" + q[0].toFixed(1) + " " + q[1].toFixed(1);
  }
  document.getElementById("mesh-lines").setAttribute("d", d);
})();
```
